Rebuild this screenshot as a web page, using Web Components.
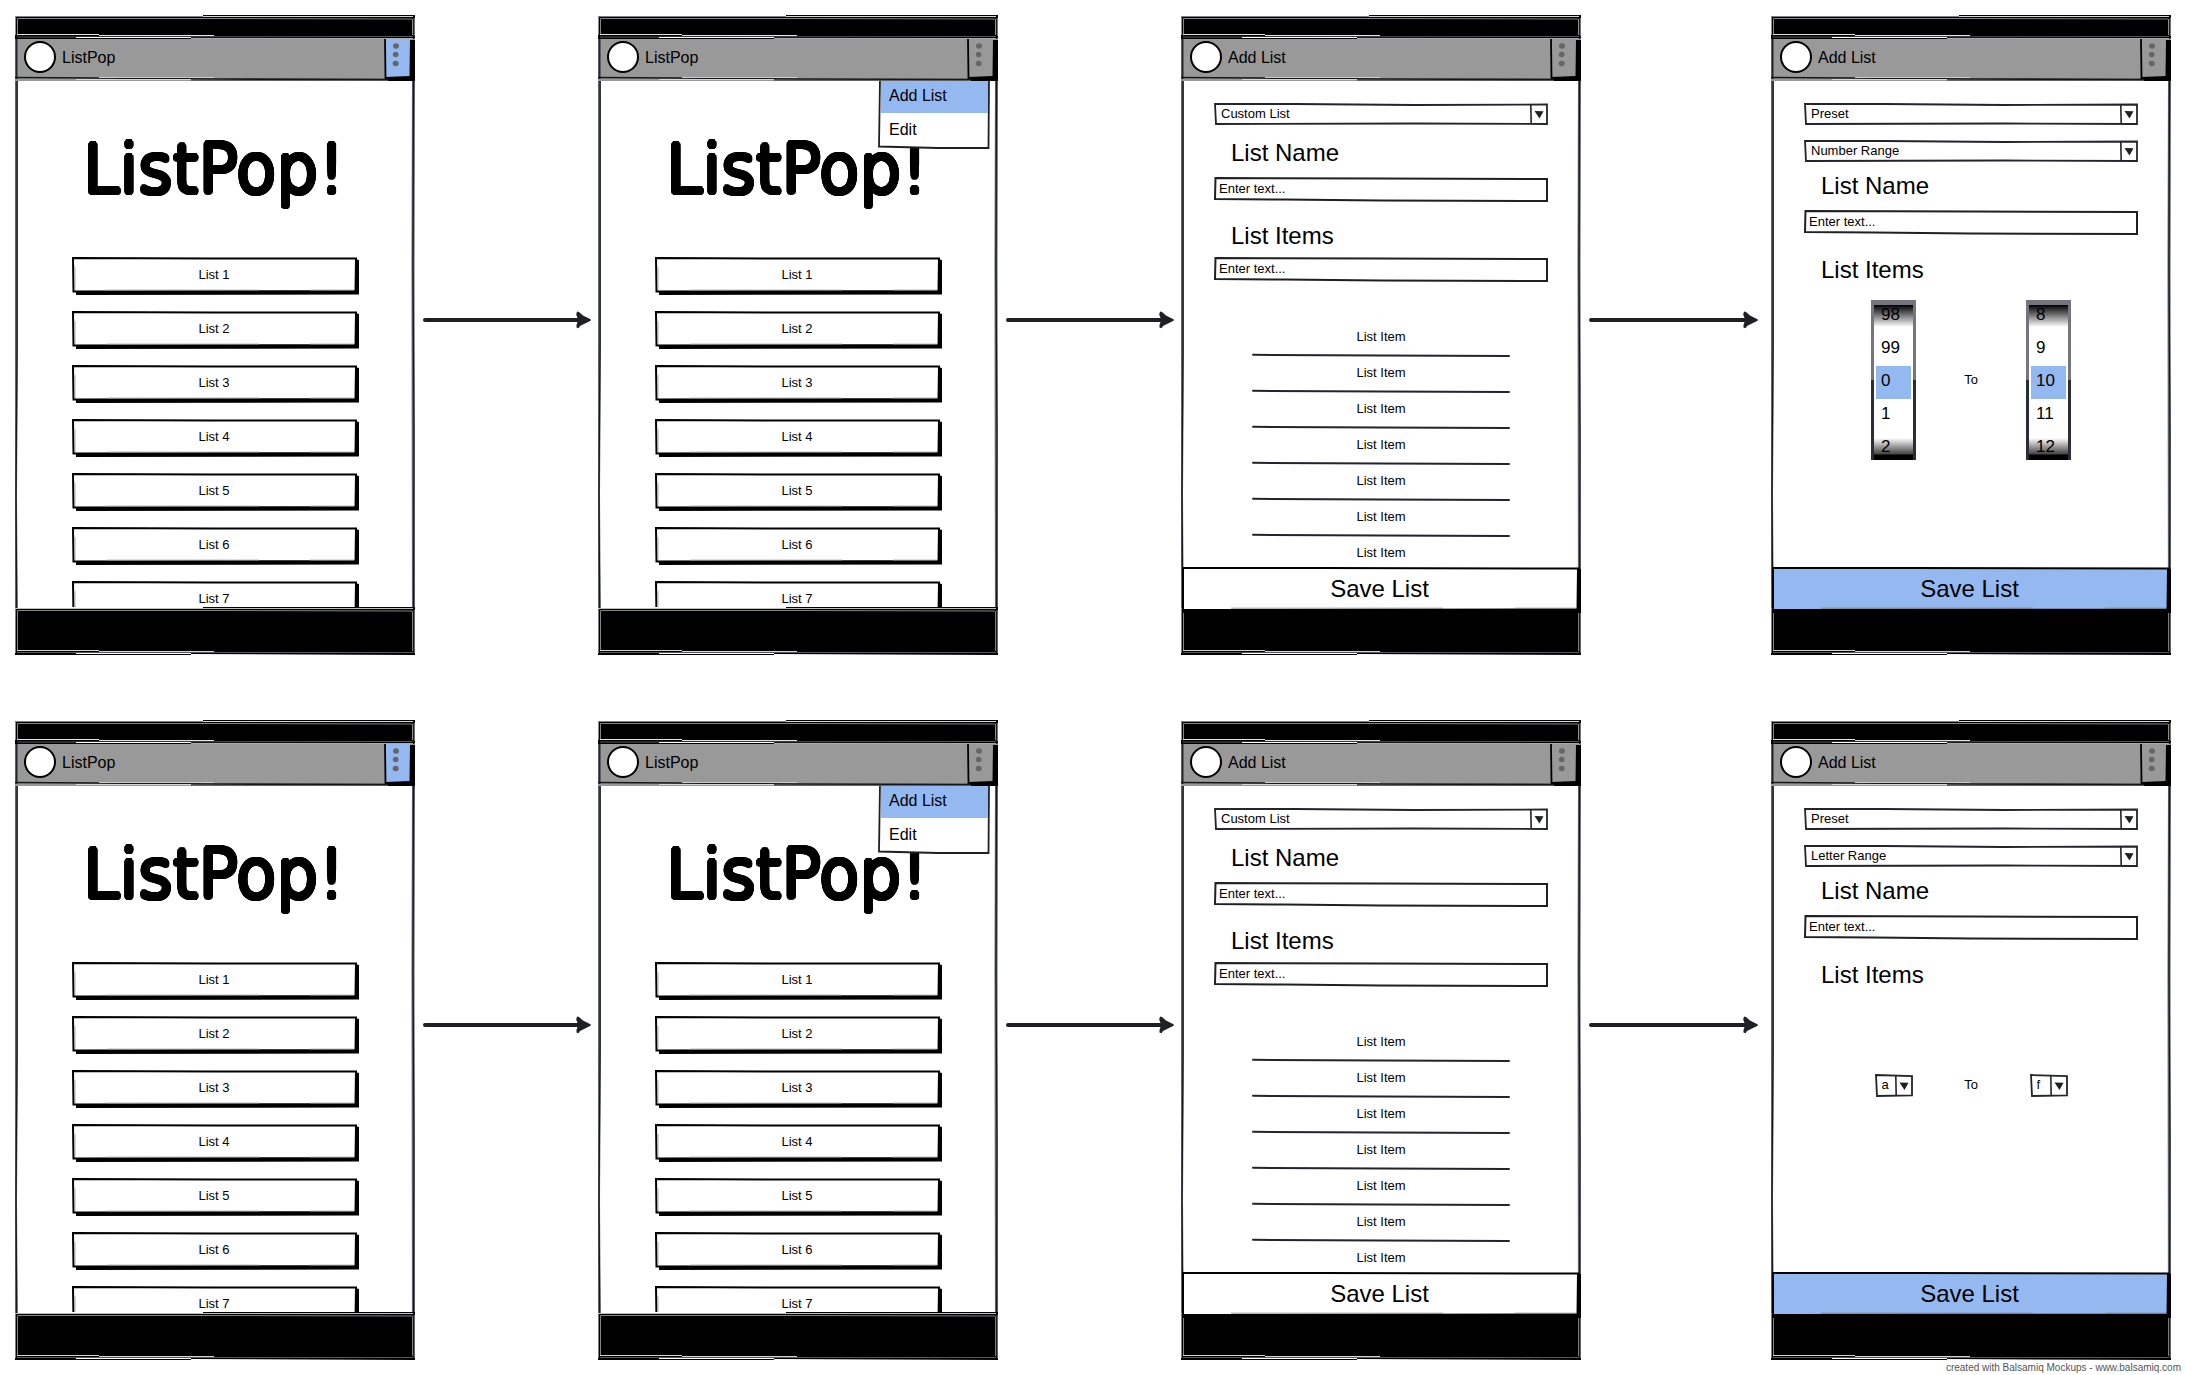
<!DOCTYPE html>
<html lang="en">
<head>
<meta charset="utf-8">
<title>ListPop wireframes</title>
<style>
  body { margin: 0; background: #fff; color: #000; font: 13px/16px "Liberation Sans", Arial, sans-serif; }
</style>
</head>
<body>
<wire-board></wire-board>

<script>
const BASE = `
  * { box-sizing: border-box; }
  :host { display: block; position: relative; }
  svg.ink { position: absolute; inset: 0; width: 100%; height: 100%; display: block; pointer-events: none; z-index: -1; }
  button, input, select { font: inherit; color: inherit; background: none; border: 0; margin: 0; padding: 0; border-radius: 0; }
  ul { list-style: none; margin: 0; padding: 0; }
`;
const ink = (w, h, body) =>
  `<svg class="ink" viewBox="0 0 ${w} ${h}" preserveAspectRatio="none" aria-hidden="true">${body}</svg>`;

/* Ring of shadows that thickens letters with a round pen */
const roundPen = r => Array.from({ length: 24 }, (_, i) => {
  const a = i * Math.PI / 12;
  return `${(r * Math.cos(a)).toFixed(2)}px ${(r * Math.sin(a)).toFixed(2)}px 0 #000`;
}).join(',');

function define(name, render) {
  customElements.define(name, class extends HTMLElement {
    connectedCallback() {
      if (this.shadowRoot) return;
      const root = this.attachShadow({ mode: 'open', delegatesFocus: true });
      root.innerHTML = render(this);
    }
  });
}

/* Arrow between two screens */
define('flow-arrow', () => `
  <style>${BASE}
    :host { display: flex; align-items: center; align-self: center; padding: 0 7px 0 8px; margin-bottom: 30px; }
    :host([short]) { padding-right: 13px; }
    .line { flex: 1; height: 4px; border-radius: 2px 0 0 2px; background: #1f2024; }
    svg { width: 16px; height: 18px; display: block; margin-left: -1px; }
  </style>
  <div class="line"></div>
  <svg viewBox="0 0 16 18" aria-hidden="true"><path d="M2 0.5 L4 1 L8 4.5 L15.5 8.3 L16 9.2 L15 10 L9 13 L5 15 L3.5 17.3 L1.5 16.5 L1.5 14 L2.5 11 L0 11 L0 7 L2.5 7 L1.2 3.5Z" fill="#1f2024"/></svg>`);

/* Phone outline with status bar, app bar and bottom bar */
define('phone-frame', el => `
  <style>${BASE}
    :host { display: flex; flex-direction: column; isolation: isolate; }
    .top { position: relative; height: 24px; }
    .bar { position: relative; height: 42px; display: flex; z-index: 2; }
    .logo { width: 32px; height: 32px; margin: 2px 6px 0 9px; border: 2px solid #000; border-radius: 50%; background: #fff; }
    .name { flex: 1; font-size: 16px; line-height: 38px; }
    .more { position: relative; width: 31px; cursor: pointer; z-index: 0; }
    .screen { height: 526px; display: flex; flex-direction: column; position: relative; z-index: 1; }
    .screen ::slotted(*) { flex: 1; min-height: 0; }
    .base { position: relative; height: 48px; }
  </style>
  ${ink(400, 640, `
    <path d="M1.5 60 L1.5 330 L0.5 480 L1.5 638" fill="none" stroke="#60626c" stroke-width="3"/>
    <path d="M2 60 L2 330 L1 480 L2 638" fill="none" stroke="#16171d" stroke-width="1.2"/>
    <path d="M398.5 60 L398 250 L398.5 638" fill="none" stroke="#60626c" stroke-width="3"/>
    <path d="M398.5 60 L398 250 L399 420 L398.5 638" fill="none" stroke="#16171d" stroke-width="1.2"/>`)}
  <div class="top">${ink(400, 24, `
    <path d="M0 1.5 L188 1.5 L188 0 L400 0 L400 23 L399 24 L0 24Z" fill="#000"/>
    <path d="M188 1.5 H398" stroke="#d8d8cc" stroke-width="1"/>
    <path d="M0.5 2 V20 M399.3 3 V21 M397.5 4 V20" stroke="#8d8f8a" stroke-width="1"/>
    <path d="M2.5 3.5 H200 L397 4 M2.5 3.5 V20" fill="none" stroke="#7e8490" stroke-width="1"/>
    <path d="M2 19.5 H84 M84 20.5 H199" stroke="#e4e4e4" stroke-width="1"/>
    <path d="M2 22 H60 L398 21.5" stroke="#555860" stroke-width="1" fill="none"/>
    <path d="M61 22.5 H176" stroke="#fff" stroke-width="1"/>
    <path d="M176 23.5 H398" stroke="#aaa" stroke-width="1"/>`)}</div>
  <div class="bar">
    ${ink(400, 42, `
      <rect width="400" height="42" fill="#999"/>
      <path d="M1.5 0 V40" stroke="#23252e" stroke-width="2"/>
      <path d="M0 38.5 L80 39 L200 40 L400 40.5" fill="none" stroke="#16171b" stroke-width="1.6"/>
      <path d="M61 40.5 H176" stroke="#d5d5d5"/><path d="M84 38.5 H199" stroke="#ccc"/>
      <path d="M176 42 H400" stroke="#333"/>`)}
    <div class="logo"></div>
    <div class="name">${el.getAttribute('name')}</div>
    <button class="more" aria-label="More options">${ink(31, 42, `
      <path d="M4 39 L4 42 L31 42 L31 1 L25 1 L25 38Z" fill="#000"/>
      <path d="M1 0 L2 38.5 L25.5 37.5 L26 0Z" fill="${el.hasAttribute('active') ? '#94b9f1' : '#999'}"/>
      <path d="M1 0 L1.5 39 L26 38" fill="none" stroke="#000" stroke-width="1.8"/>
      <g fill="#666"><ellipse cx="12" cy="7" rx="3" ry="2.8"/><ellipse cx="11.7" cy="15.5" rx="2.8" ry="2.8"/><ellipse cx="11.7" cy="24.5" rx="3" ry="2.8"/></g>`)}</button>
  </div>
  <div class="screen"><slot></slot></div>
  <div class="base">${ink(400, 48, `
    <path d="M0 1.5 L188 1.5 L188 0 L400 0 L400 48 L176 47 L176 48 L0 48Z" fill="#000"/>
    <path d="M0 1.5 H188 L398 1.5" fill="none" stroke="#bfc0b4" stroke-width="1"/>
    <path d="M2.5 3.5 H200 L397 4 M2.5 3.5 V44" fill="none" stroke="#7e8490" stroke-width="1"/>
    <path d="M0.5 2 V46 M399.3 3 V46 M397.5 4 V44" stroke="#7c7e7a" stroke-width="1"/>
    <path d="M2 43.5 H84 M84 44.5 H199" stroke="#d4d4cc" stroke-width="1"/>
    <path d="M2 45.5 H398" stroke="#555860" stroke-width="1"/>
    <path d="M61 46.5 H176" stroke="#fff" stroke-width="1"/>`)}</div>`);

/* Raised sketch button */
define('raised-button', () => `
  <style>${BASE}
    :host { isolation: isolate; font-size: 13px; }
    button { display: block; width: 100%; height: 38px; padding: 0 3px 3px 0; cursor: pointer; }
  </style>
  ${ink(287, 38, `
    <path d="M4 34 L4 38 L287 37.5 L287 3 L283 2Z" fill="#000"/>
    <path d="M1 1 L140 1.5 L284 1.5 L283.5 34 L140 34.3 L1.5 34.5Z" fill="#fff" stroke="#000" stroke-width="2"/>
    <path d="M3 10 V33" stroke="#999" stroke-width="0.8"/>
    <path d="M35 33 H187 M238 33 H282" stroke="#aaa" stroke-width="0.8"/>`)}
  <button><slot></slot></button>`);

/* Full-width save button that overlaps the bottom bar */
define('save-button', el => `
  <style>${BASE}
    :host { isolation: isolate; font-size: 24px; }
    button { display: block; width: 100%; height: 46px; padding: 0 3px 3px 0; cursor: pointer; }
  </style>
  ${ink(400, 46, `
    <path d="M2 41 L2 46 L400 46 L400 2 L395 1Z" fill="#000"/>
    <path d="M2 1 L140 1 L397 1.5 L396.5 42.5 L2 43Z" fill="${el.hasAttribute('active') ? '#94b9f1' : '#fff'}" stroke="#000" stroke-width="2"/>
    <path d="M50 41.2 H262 M334 41.2 H395" stroke="#777" stroke-width="0.8"/>`)}
  <button><slot></slot></button>`);

/* Drop-down */
define('sketch-select', el => {
  const small = el.hasAttribute('small');
  const v = el.getAttribute('value');
  return `
  <style>${BASE}
    :host { display: flex; isolation: isolate; height: 22px; }
    :host([small]) { width: 38px; height: 23px; }
    select { appearance: none; flex: 1; min-width: 0; padding: 0 0 0 7px; line-height: 20px; outline: 0; }
    .arrow { width: 18px; height: 100%; flex: none; display: block; pointer-events: none; }
  </style>
  ${ink(small ? 38 : 334, 22, small
    ? `<path d="M1 1 L37 2 L37 20.5 L2 21Z" fill="#fff" stroke="#23242c" stroke-width="1.8"/>`
    : `<path d="M1 1 L80 1 L200 2 L333 1.5 L333 21 L200 20.5 L2 21Z" fill="#fff" stroke="#23242c" stroke-width="1.8"/>`)}
  <select aria-label="${el.getAttribute('label')}"><option>${v}</option></select>
  <svg class="arrow" viewBox="0 0 18 22" aria-hidden="true"><path d="M0.8 1.5 L1.2 21" stroke="#23242c" stroke-width="1.6"/><path d="M4.5 8 L13.5 8.2 L9.5 15.5Z" fill="#1f2024"/></svg>`;
});

/* Labelled text box */
define('text-field', el => `
  <style>${BASE}
    label { display: block; font-size: 24px; line-height: 40px; padding: 0 0 0 17px; margin-bottom: 4px; }
    :host([tight]) label { margin-bottom: 1px; }
    .box { position: relative; isolation: isolate; }
    input { display: block; width: 100%; height: 25px; padding: 0 5px 3px; outline: 0; }
  </style>
  <label for="field">${el.getAttribute('label')}</label>
  <div class="box">
    ${ink(334, 25, `<path d="M1.5 1 L167 1.5 L333 2 L333 24 L167 23.5 L70 22.5 L1 22Z" fill="#fff" stroke="#1f2024" stroke-width="2"/>`)}
    <input id="field" type="text" value="Enter text...">
  </div>`);

/* Number wheel */
define('number-wheel', el => `
  <style>${BASE}
    :host { width: 45px; height: 160px; padding: 5px 3px 0; overflow: hidden;
      background: linear-gradient(#75747f 50%, #2b2c3a 50%); font-size: 17px; }
    ul { height: 155px; padding: 0 2px; display: flex; flex-direction: column; justify-content: center;
      background: linear-gradient(#000, #fff 22px, #fff 133px, #444 149px, #000 150px); }
    li { flex: none; height: 33px; line-height: 30px; padding-left: 5px; }
    li[aria-selected] { background: #94b9f1; }
  </style>
  <ul role="listbox" aria-label="${el.getAttribute('label')}">
    ${el.getAttribute('values').split(',').map((n, i) =>
      `<li role="option"${i === 2 ? ' aria-selected="true"' : ''}>${n}</li>`).join('')}
  </ul>`);

/* From / to row */
define('range-row', () => `
  <style>${BASE}
    :host { display: grid; grid-template-columns: 45px 1fr 45px; width: 200px; height: 160px;
      margin: 0 auto; align-items: center; justify-items: center; }
  </style>
  <slot name="from"></slot><span>To</span><slot name="to"></slot>`);

/* Home screen */
define('home-view', el => `
  <style>${BASE}
    :host { overflow: hidden; padding: 0 56px 0 57px; }
    h1 { margin: 0 3px 0 0; font: 200 66px/80px "DejaVu Sans", sans-serif; padding: 49px 0 47px; text-align: center;
      white-space: nowrap; text-shadow: ${roundPen(3)}; }
    .lists { display: flex; flex-direction: column; gap: 16px; }
    .menu { position: absolute; top: -2px; right: 8px; width: 112px; isolation: isolate; padding: 0 2px 2px 3px; }
    .menu button { display: block; width: 100%; height: 34px; padding: 0 8px; text-align: left; font-size: 16px; }
    .menu button:first-child { background: #94b9f1; }
  </style>
  <h1>ListPop!</h1>
  <div class="lists">${[1, 2, 3, 4, 5, 6, 7].map(n => `<raised-button>List ${n}</raised-button>`).join('')}</div>
  ${el.hasAttribute('menu') ? `<div class="menu">
    <div role="menu"><button role="menuitem">Add List</button><button role="menuitem">Edit</button></div>
    ${ink(112, 70, `<path d="M2 0 L1 67.5 L60 69 L110.5 69 L111 0Z" fill="#fff" stroke="#1f2024" stroke-width="1.8"/>`)}
  </div>` : ''}`);

/* Custom list form */
define('custom-view', () => `
  <style>${BASE}
    :host { display: flex; flex-direction: column; }
    form { display: block; padding: 22px 33px 0; }
    .name { margin-top: 8px; }
    .items { margin-top: 14px; }
    ul { padding: 39px 38px 0; }
    li { position: relative; height: 36px; line-height: 31px; text-align: center; }
    li:last-child { height: 30px; }
    save-button { margin: auto 0 -6px; }
  </style>
  <form>
    <sketch-select label="List type" value="Custom List"></sketch-select>
    <text-field class="name" label="List Name"></text-field>
    <text-field class="items" tight label="List Items"></text-field>
    <ul>${[1, 2, 3, 4, 5, 6, 7].map(n => `<li>List Item${n < 7 ? ink(258, 36,
      `<path d="M1 33.8 L130 34.5 L257 35" fill="none" stroke="#23242c" stroke-width="2" stroke-linecap="round"/>`) : ''}</li>`).join('')}</ul>
  </form>
  <save-button>Save List</save-button>`);

/* Preset list form */
define('preset-view', el => {
  const numbers = el.getAttribute('kind') === 'Number Range';
  return `
  <style>${BASE}
    :host { display: flex; flex-direction: column; }
    form { display: block; padding: 22px 33px 0; }
    .kind { margin-top: 15px; }
    .name { margin-top: 4px; }
    h2 { margin: 15px 0 10px; padding-left: 17px; font-size: 24px; font-weight: 400; line-height: 40px; }
    save-button { margin: auto 0 -6px; }
  </style>
  <form>
    <sketch-select label="List type" value="Preset"></sketch-select>
    <sketch-select class="kind" label="Preset kind" value="${el.getAttribute('kind')}"></sketch-select>
    <text-field class="name" label="List Name"></text-field>
    <h2>List Items</h2>
    <range-row>${numbers
      ? `<number-wheel slot="from" label="From" values="98,99,0,1,2"></number-wheel>
         <number-wheel slot="to" label="To" values="8,9,10,11,12"></number-wheel>`
      : `<sketch-select small slot="from" label="From" value="a"></sketch-select>
         <sketch-select small slot="to" label="To" value="f"></sketch-select>`}</range-row>
  </form>
  <save-button active>Save List</save-button>`;
});

/* Whole board: two rows of four screens */
define('wire-board', () => {
  const row = kind => `<section>
    <phone-frame name="ListPop" active><home-view></home-view></phone-frame>
    <flow-arrow></flow-arrow>
    <phone-frame name="ListPop"><home-view menu></home-view></phone-frame>
    <flow-arrow></flow-arrow>
    <phone-frame name="Add List"><custom-view></custom-view></phone-frame>
    <flow-arrow short></flow-arrow>
    <phone-frame name="Add List"><preset-view kind="${kind}"></preset-view></phone-frame>
  </section>`;
  return `
  <style>${BASE}
    :host { padding: 15px 15px 0; }
    section { display: grid; grid-template-columns: 400fr 183fr 400fr 183fr 400fr 190fr 400fr; }
    section + section { margin-top: 65px; }
    footer { margin-right: -10px; text-align: right; font-size: 10px; line-height: 15px; color: #555; }
  </style>
  ${row('Number Range')}${row('Letter Range')}
  <footer>created with Balsamiq Mockups - www.balsamiq.com</footer>`;
});
</script>
</body>
</html>
